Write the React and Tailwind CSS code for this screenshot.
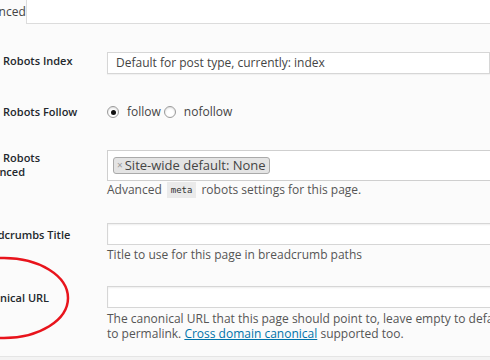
import React from "react";

const font = { fontFamily: '"Open Sans", "Noto Sans", sans-serif' };

function Label({ children, className = "" }) {
  return (
    <div className={"w-[134px] shrink-0 text-[11px] font-semibold text-[#23282d] leading-[14px] " + className}>
      {children}
    </div>
  );
}

function Input({ className = "" }) {
  return (
    <div className={"w-[420px] border border-[#d6d6d6] bg-white shadow-[inset_0_1px_2px_rgba(0,0,0,0.07)] " + className} />
  );
}

export default function App() {
  return (
    <div className="w-[490px] h-[360px] overflow-hidden bg-[#fbfbfb] relative" style={font}>
      {/* tab header */}
      <div className="flex h-[24px] bg-white">
        <div className="ml-[-32px] w-[59px] h-[24px] border-r border-[#dcdcdc] bg-[#fbfbfb] text-[12px] text-[#444] leading-[24px] pl-[3px]">
          Advanced
        </div>
        <div className="flex-1 border-b border-[#dcdcdc]" />
      </div>

      <div className="ml-[-27px] relative">
        {/* Robots Index */}
        <div className="flex items-center mt-[28px] h-[22px]">
          <Label className="-mt-[4px]">Meta Robots Index</Label>
          <div className="w-[420px] h-[22px] border border-[#d6d6d6] bg-white shadow-[0_1px_1px_rgba(0,0,0,0.04)] text-[12px] text-[#444] leading-[20px] pl-[8px]">
            Default for post type, currently: index
          </div>
        </div>

        {/* Robots Follow */}
        <div className="flex items-center mt-[29px] h-[18px]">
          <Label>Meta Robots Follow</Label>
          <div className="flex items-center text-[12px] text-[#444]">
            <span className="w-[12px] h-[12px] rounded-full border border-[#9a9a9a] bg-white flex items-center justify-center shadow-[inset_0_1px_2px_rgba(0,0,0,0.15)]">
              <span className="w-[5px] h-[5px] rounded-full bg-[#111]" />
            </span>
            <span className="ml-[8px]">follow</span>
            <span className="ml-[3px] w-[12px] h-[12px] rounded-full border border-[#9a9a9a] bg-white shadow-[inset_0_1px_2px_rgba(0,0,0,0.15)]" />
            <span className="ml-[8px]">nofollow</span>
          </div>
        </div>

        {/* Robots Advanced */}
        <div className="flex mt-[29px]">
          <Label className="pt-[1px]">
            Meta Robots
            <br />
            Advanced
          </Label>
          <div>
            <div className="w-[420px] h-[31px] border border-[#cfcfcf] bg-white flex items-center pl-[5px]">
              <div className="h-[17px] flex items-center bg-[#e4e4e4] border border-[#aaa] rounded-[3px] pl-[3px] pr-[3px] text-[13px] text-[#444] leading-[15px]">
                <span className="text-[10px] text-[#999] mr-[2px]">×</span>
                Site-wide default: None
              </div>
            </div>
            <div className="text-[12px] text-[#555] leading-[16px] mt-[1px] flex items-center">
              Advanced
              <code
                className="mx-[5px] px-[4px] py-[1px] bg-[#eaeaea] text-[9px] text-[#333] leading-[14px]"
                style={{ fontFamily: '"DejaVu Sans Mono", monospace' }}
              >
                meta
              </code>
              robots settings for this page.
            </div>
          </div>
        </div>

        {/* Breadcrumbs Title */}
        <div className="flex mt-[25px]">
          <Label className="pt-[5px]">Breadcrumbs Title</Label>
          <div>
            <Input className="h-[22px]" />
            <div className="text-[12px] text-[#555] leading-[16px] mt-[2px]">
              Title to use for this page in breadcrumb paths
            </div>
          </div>
        </div>

        {/* Canonical URL */}
        <div className="flex mt-[23px]">
          <Label className="pt-[5px]">Canonical URL</Label>
          <div>
            <Input className="h-[22px]" />
            <div className="text-[12px] text-[#555] leading-[15px] mt-[3px] whitespace-nowrap">
              The canonical URL that this page should point to, leave empty to default
              <br />
              to permalink.{" "}
              <a className="text-[#0073aa] underline">Cross domain canonical</a> supported too.
            </div>
          </div>
        </div>
      </div>

      {/* bottom edge */}
      <div className="absolute left-0 right-0 top-[356px] h-[4px] border-t border-[#e5e5e5] bg-[#f3f3f3]" />

      {/* red annotation ellipse */}
      <svg className="absolute left-0 top-0" width="490" height="360" viewBox="0 0 490 360">
        <ellipse cx="4" cy="298" rx="64" ry="40" fill="none" stroke="#e8141c" strokeWidth="2.5" />
      </svg>
    </div>
  );
}
